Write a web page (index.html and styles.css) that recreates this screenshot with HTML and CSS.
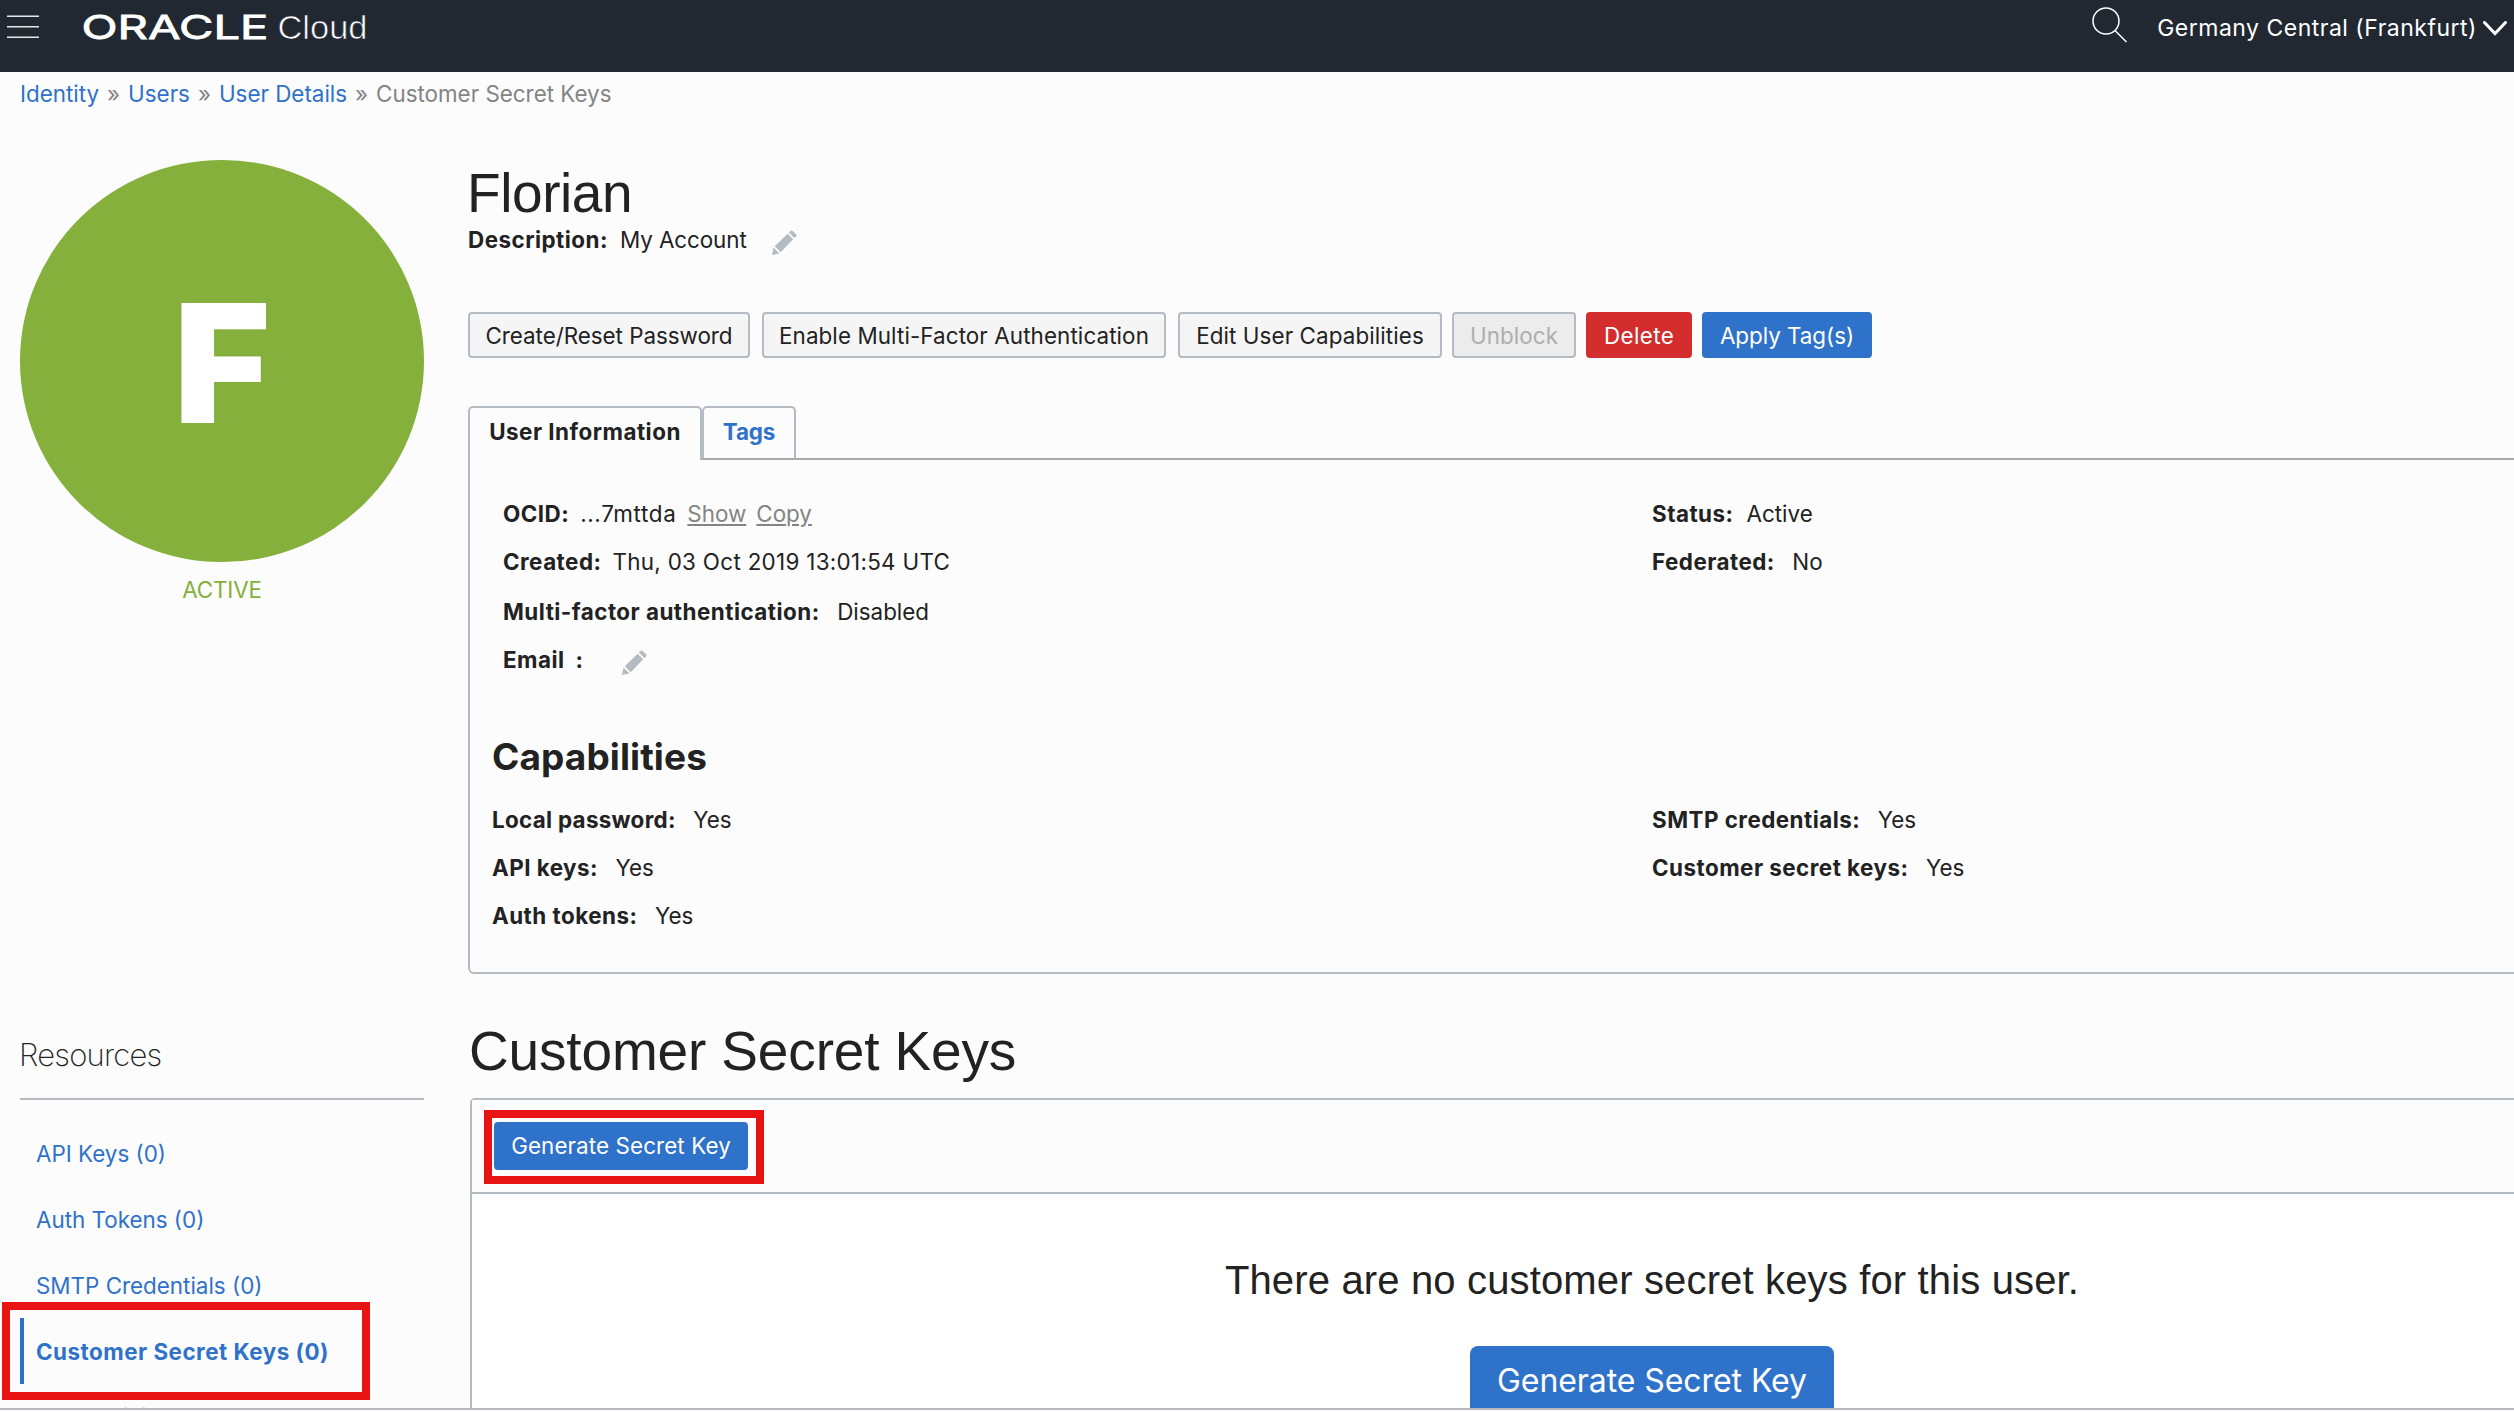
FILE: index.html
```html
<!DOCTYPE html>
<html lang="en">
<head>
<meta charset="utf-8">
<title>User Details - Customer Secret Keys</title>
<link rel="stylesheet" href="styles.css">
</head>
<body>
<svg class="defs" width="0" height="0" aria-hidden="true">
  <symbol id="pencil" viewBox="0 0 25 25">
    <path d="M0 25 L1.5 17.5 L7.5 23.5 Z M2.7 16.3 L15.7 3.8 L21.2 9.3 L8.7 22.2 Z M16.9 2.6 L18.6 0.8 Q19.6 0 20.6 0.9 L24.2 4.5 Q25.1 5.5 24.2 6.4 L22.4 8.1 Z"/>
  </symbol>
</svg>

<header class="topbar">
  <svg class="menu" width="32" height="24" viewBox="0 0 32 24"><path d="M0 1.2H32M0 11.7H32M0 22.2H32"/></svg>
  <svg class="logo" width="290" height="40" viewBox="0 0 290 40" role="img">
    <text class="logo-brand" x="-0.5" y="31.5" textLength="187" lengthAdjust="spacingAndGlyphs">ORACLE</text>
    <text class="logo-product" x="195.5" y="31.5" textLength="90" lengthAdjust="spacingAndGlyphs">Cloud</text>
  </svg>
  <svg class="search" width="36" height="36" viewBox="0 0 36 36"><circle cx="14" cy="14" r="13"/><path d="M23 23.5L34.5 35"/></svg>
  <span class="region">Germany Central (Frankfurt)</span>
  <svg class="chevron" width="24" height="15" viewBox="0 0 24 15"><path d="M1.5 1.5L12 12.5L22.5 1.5"/></svg>
</header>

<div class="viewport">
  <nav class="crumbs">
    <a>Identity</a><i>»</i><a>Users</a><i>»</i><a>User Details</a><i>»</i><span>Customer Secret Keys</span>
  </nav>

  <div class="page">
    <aside class="profile">
      <div class="avatar">F</div>
      <div class="state">ACTIVE</div>
    </aside>

    <main class="details">
      <h1>Florian</h1>
      <div class="description">
        <b>Description:</b><span>My Account</span><svg class="pencil" width="25" height="25"><use href="#pencil"/></svg>
      </div>

      <div class="actions">
        <button class="btn w-reset">Create/Reset Password</button>
        <button class="btn w-mfa">Enable Multi-Factor Authentication</button>
        <button class="btn w-edit">Edit User Capabilities</button>
        <button class="btn w-unblock disabled">Unblock</button>
        <button class="btn w-delete danger">Delete</button>
        <button class="btn w-tags primary">Apply Tag(s)</button>
      </div>

      <div class="tabs">
        <div class="tab active">User Information</div>
        <div class="tab">Tags</div>
      </div>

      <section class="panel">
        <div class="info">
          <div>
            <div class="row"><b>OCID:</b><span class="ocid">...7mttda</span><u>Show</u><u class="copy">Copy</u></div>
            <div class="row"><b>Created:</b><span class="date">Thu, 03 Oct 2019 13:01:54 UTC</span></div>
            <div class="row wide low"><b>Multi-factor authentication:</b><span>Disabled</span></div>
            <div class="row email"><b>Email</b><b>:</b><svg class="pencil" width="25" height="25"><use href="#pencil"/></svg></div>
          </div>
          <div>
            <div class="row"><b>Status:</b><span class="status">Active</span></div>
            <div class="row wide"><b>Federated:</b><span>No</span></div>
          </div>
        </div>

        <div class="caps">
          <h2>Capabilities</h2>
          <div>
            <div class="row wide"><b class="tight">Local password:</b><span>Yes</span></div>
            <div class="row wide"><b>API keys:</b><span>Yes</span></div>
            <div class="row wide"><b>Auth tokens:</b><span>Yes</span></div>
          </div>
          <div>
            <div class="row wide"><b>SMTP credentials:</b><span>Yes</span></div>
            <div class="row wide"><b>Customer secret keys:</b><span>Yes</span></div>
          </div>
        </div>
      </section>
    </main>

    <aside class="resources">
      <h3>Resources</h3>
      <ul>
        <li>API Keys (0)</li>
        <li>Auth Tokens (0)</li>
        <li>SMTP Credentials (0)</li>
        <li class="selected">Customer Secret Keys (0)<span class="mark mark-nav"></span></li>
        <li>Groups (0)</li>
      </ul>
    </aside>

    <section class="keys">
      <h1>Customer Secret Keys</h1>
      <div class="table">
        <div class="toolbar">
          <button class="btn w-generate primary">Generate Secret Key</button>
          <span class="mark mark-button"></span>
        </div>
        <div class="empty">
          <p>There are no customer secret keys for this user.</p>
          <button class="btn-large">Generate Secret Key</button>
        </div>
      </div>
    </section>
  </div>
</div>
<div class="bottom-rule"></div>
</body>
</html>
```
FILE: styles.css
```css
* { box-sizing: border-box; }

body {
  margin: 0;
  width: 2514px;
  height: 1412px;
  overflow: hidden;
  display: flex;
  flex-direction: column;
  background: #fcfcfc;
  color: #222;
  font: 400 22.4px/30px Inter, sans-serif;
  letter-spacing: 0;
}

h1, h2, h3, p, ul { margin: 0; padding: 0; }
b { font-weight: 700; letter-spacing: 0.48px; }
.tight { letter-spacing: 0.3px; }
.defs { position: absolute; }

/* Top bar */
.topbar {
  flex: none;
  height: 72px;
  padding: 0 8px 18px 7px;
  display: flex;
  align-items: center;
  background: #212832;
  color: #fff;
}
.menu { fill: none; stroke: #e8e8e8; stroke-width: 1.6; }
.logo { margin-left: 43px; fill: #fff; overflow: visible; }
.logo-brand {
  font: 400 32.5px Inter, sans-serif;
  letter-spacing: 0;
  stroke: #fff;
  stroke-width: 0.8;
}
.logo-product { font: 300 33.5px "Liberation Sans", sans-serif; letter-spacing: 0; stroke: #212832; stroke-width: 0.7; }
.search {
  margin: -5px 0 0 auto;
  fill: none;
  stroke: #fff;
  stroke-width: 1.5;
}
.region { margin: 1px 0 0 29px; font-size: 23px; letter-spacing: 0.5px; }
.chevron {
  margin: 3px -1px 0 6px;
  fill: none;
  stroke: #fff;
  stroke-width: 3;
  stroke-linecap: round;
}

/* Scrolling area */
.viewport { flex: none; height: 1336px; overflow: hidden; }
.bottom-rule { flex: none; height: 2px; background: #b5bac0; }

.crumbs {
  display: flex;
  padding: 6px 0 0 20px;
  line-height: 32px;
  height: 37px;
  color: #848484;
}
.crumbs a { color: #2f72c9; }
.crumbs i { font-style: normal; width: 29px; text-align: center; }

.page {
  display: grid;
  grid-template: 911px auto / 404px 2366px;
  column-gap: 44px;
  padding-left: 20px;
}

/* Profile */
.profile { padding-top: 51px; }
.avatar {
  height: 402px;
  border-radius: 50%;
  background: #84b03b;
  color: #fff;
  font-size: 165px;
  font-weight: 900;
  line-height: 406px;
  text-align: center;
}
.state {
  margin-top: 13px;
  text-align: center;
  letter-spacing: -0.15px;
  color: #84b03b;
}

h1 {
  font: 400 55px/60px "Liberation Sans", sans-serif;
  letter-spacing: -0.15px;
}
.details { padding-top: 54px; }
.details h1 { margin-left: -1px; letter-spacing: -0.42px; }

.description { display: flex; align-items: center; margin: 2px 0 57px 0; }
.description span { margin-left: 12px; letter-spacing: -0.07px; }
.pencil { fill: #b5bbc2; }
.description .pencil { margin: 5px 0 0 25px; }

/* Buttons */
.actions { display: flex; gap: 12px; }
.btn {
  height: 46px;
  padding: 1px 0 0;
  border: 2px solid #b5bbc2;
  border-radius: 4px;
  background: #f5f5f5;
  color: #222;
  font: inherit;
  letter-spacing: 0.1px;
  text-align: center;
  white-space: nowrap;
}
.btn.disabled { background: #ececec; color: #aeaeae; margin-left: -2px; }
.btn.danger { background: #d32d2d; border-color: #d32d2d; color: #fff; margin-left: -2px; }
.btn.primary { background: #2f72c9; border-color: #2f72c9; color: #fff; }
.w-reset { width: 282px; letter-spacing: -0.03px; }
.w-mfa { width: 404px; }
.w-edit { width: 264px; }
.w-unblock { width: 124px; }
.w-delete { width: 106px; letter-spacing: 0.4px; }
.w-tags { width: 170px; margin-left: -2px; letter-spacing: -0.03px; }

/* Tabs */
.tabs { display: flex; margin: 48px 0 -2px; position: relative; }
.tab {
  height: 52px;
  width: 94px;
  border: 2px solid #b5bbc2;
  border-bottom: 0;
  border-radius: 5px 5px 0 0;
  line-height: 48px;
  font-weight: 700;
  text-align: center;
  color: #2f72c9;
  letter-spacing: -0.1px;
}
.tab.active {
  width: 234px;
  height: 54px;
  background: #fcfcfc;
  color: #222;
  letter-spacing: 0.5px;
}

.panel {
  height: 516px;
  border: 2px solid #b5bbc2;
  border-top-color: #a9a9a9;
  border-radius: 0 0 6px 6px;
  padding-top: 30px;
}
.info, .caps { display: grid; }
.info { grid-template-columns: 1149px 1fr; padding-left: 33px; }
.caps { grid-template-columns: 1160px 1fr; padding: 48px 0 0 22px; }
.caps h2 {
  grid-column: 1 / -1;
  margin-bottom: 14px;
  font-size: 37px;
  font-weight: 700;
  line-height: 50px;
  letter-spacing: 0.1px;
}
.row { display: flex; align-items: center; height: 48px; }
.row > * + * { margin-left: 11px; }
.row.wide > * + * { margin-left: 17.5px; }
.row .status { margin-left: 13px; }
.row.low { margin-top: 2px; }
.row u { color: #848484; }
.row .copy { margin-left: 10px; }
.ocid { letter-spacing: 0.65px; }
.date { letter-spacing: 0.31px; }
.row.email .pencil { margin: 5px 0 0 38px; }

/* Resources */
.resources { padding-top: 15px; }
.resources h3 {
  padding-bottom: 23px;
  border-bottom: 2px solid #b5bac0;
  font-size: 31px;
  font-weight: 200;
  line-height: 40px;
  letter-spacing: -0.78px;
  text-indent: -1px;
}
.resources ul { list-style: none; padding-top: 20px; }
.resources li {
  position: relative;
  height: 66px;
  padding: 1px 0 0 16px;
  line-height: 66px;
  color: #2f72c9;
}
.resources .selected {
  border-left: 4px solid #2f72c9;
  padding-left: 12px;
  font-weight: 700;
  letter-spacing: 0.5px;
}

/* Red callout frames laid over the page */
.mark { position: absolute; border: 8px solid #e81313; pointer-events: none; }
.mark-nav { left: -22px; top: -16px; width: 368px; height: 98px; }
.mark-button { left: 12px; top: 10px; width: 280px; height: 74px; }

/* Keys table */
.keys { padding-left: 2px; }
.keys h1 { line-height: 62px; margin: 0 0 16px -1px; }
.table {
  border: 2px solid #b5bbc2;
  border-radius: 5px 5px 0 0;
  background: #fff;
}
.toolbar {
  position: relative;
  height: 94px;
  padding: 22px 0 0 22px;
  background: #fcfcfc;
  border-bottom: 2px solid #b5bbc2;
}
.toolbar .btn { height: 48px; padding: 0; }
.w-generate { width: 254px; }
.empty { text-align: center; height: 300px; padding-top: 61px; }
.empty p {
  font: 400 40px/50px "Liberation Sans", sans-serif;
  letter-spacing: 0.15px;
}
.btn-large {
  width: 364px;
  height: 69px;
  margin-top: 41px;
  padding: 0 0 1px;
  border: 0;
  border-radius: 8px;
  background: #2f72c9;
  color: #fff;
  font: 400 32px Inter, sans-serif;
  letter-spacing: -0.07px;
}
```
